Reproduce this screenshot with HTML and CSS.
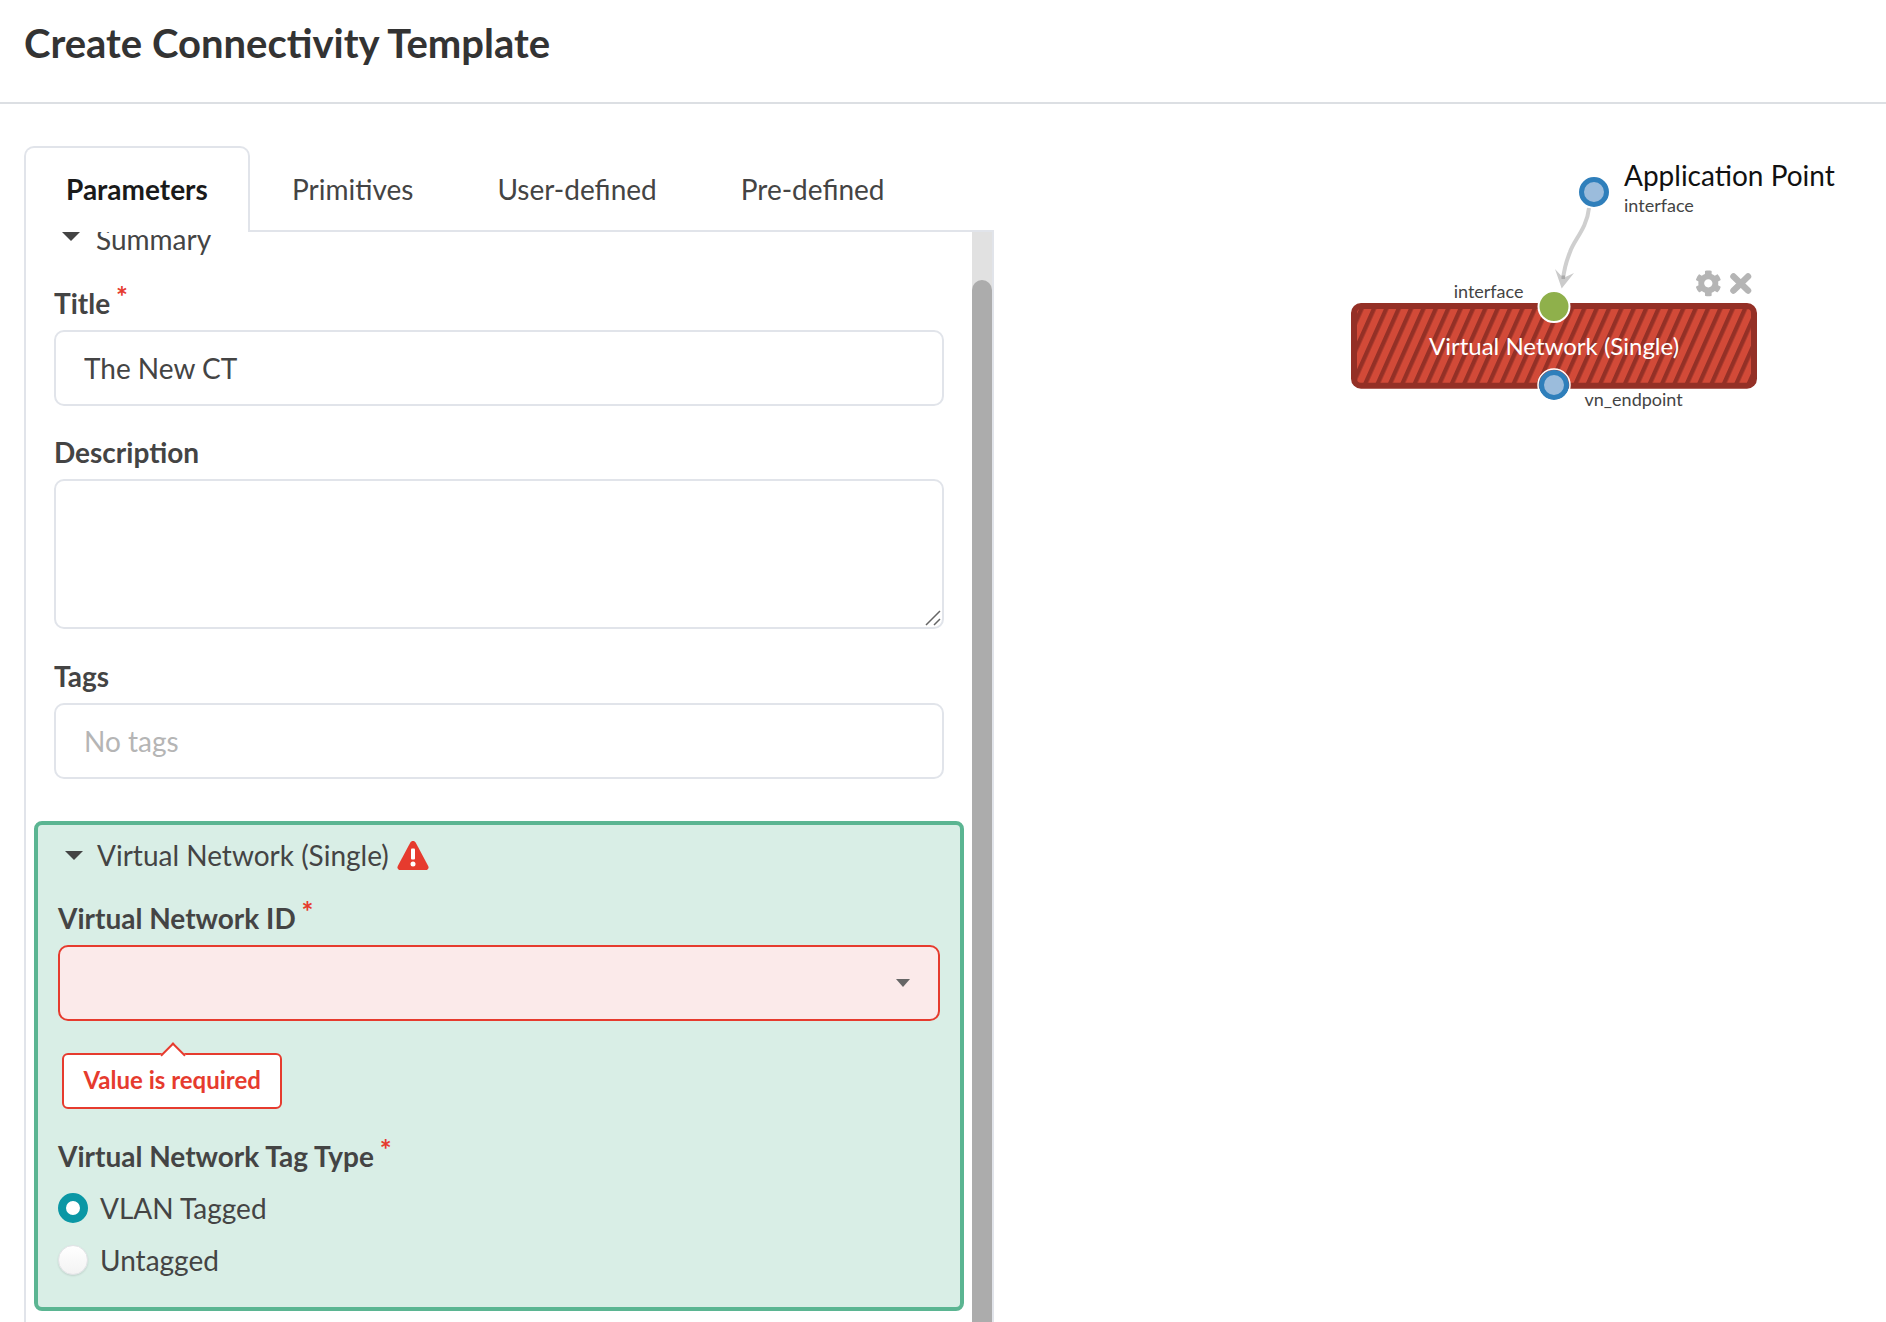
FILE: index.html
```html
<!DOCTYPE html>
<html lang="en">
<head>
<meta charset="utf-8">
<title>Create Connectivity Template</title>
<link rel="stylesheet" href="styles.css">
</head>
<body>
<header class="page-header"><h1>Create Connectivity Template</h1></header>
<main class="workspace">
  <section class="left">
    <nav class="tabs">
      <div class="tab active">Parameters</div>
      <div class="tab">Primitives</div>
      <div class="tab">User-defined</div>
      <div class="tab">Pre-defined</div>
      <div class="tab-rest"></div>
    </nav>
    <div class="panel">
      <form class="form">
        <div class="section-title summary"><span class="caret"></span>Summary</div>
        <label class="label first">Title <span class="req">*</span></label>
        <input class="field" type="text" value="The New CT">
        <label class="label desc-label">Description</label>
        <div class="area-wrap">
          <textarea class="field area"></textarea>
          <svg class="resizer" width="16" height="16" viewBox="0 0 16 16"><path d="M1 15L15 1M9 15L15 9" stroke="#666" stroke-width="1.500" fill="none"/></svg>
        </div>
        <label class="label">Tags</label>
        <input class="field" type="text" placeholder="No tags">
        <div class="vn-box">
          <div class="section-title"><span class="caret"></span>Virtual Network (Single)
            <svg class="warn" width="32" height="30" viewBox="0 0 32 30"><path d="M16 1c1.200 0 2.200.6 2.800 1.700l12.400 23.300c1 2-.3 4-2.500 4H3.300C1.100 30-.2 28 .8 26L13.200 2.700C13.800 1.600 14.800 1 16 1z" fill="#e63b2e"/><rect x="14" y="8.500" width="4" height="11" rx="1" fill="#fff"/><circle cx="16" cy="24" r="2.500" fill="#fff"/></svg>
          </div>
          <label class="label vn-label">Virtual Network ID <span class="req">*</span></label>
          <div class="select"><span class="select-caret"></span></div>
          <div class="error">Value is required</div>
          <label class="label tag-label">Virtual Network Tag Type <span class="req">*</span></label>
          <div class="radio-row"><span class="radio on"></span>VLAN Tagged</div>
          <div class="radio-row second"><span class="radio"></span>Untagged</div>
        </div>
      </form>
      <div class="scrollbar"><div class="thumb"></div></div>
    </div>
  </section>
  <section class="canvas">
    <svg class="diagram" width="892" height="400" viewBox="0 0 892 400">
      <defs>
        <pattern id="stripes" width="11.300" height="11.300" patternUnits="userSpaceOnUse" patternTransform="rotate(24)">
          <rect width="11.300" height="11.300" fill="#d24a38"/>
          <rect width="4.300" height="11.300" fill="#943026"/>
        </pattern>
      </defs>
      <g transform="translate(-994 -104)">
        <text class="t-title" x="1624" y="186">Application Point</text>
        <text class="t-small" x="1624" y="212">interface</text>
        <path d="M1589 208C1587 228 1574 240 1570 252C1566 262 1564 268 1563 280" fill="none" stroke="#cfcfcf" stroke-width="4"/>
        <path d="M1555 269L1561.700 288.500L1574 273L1563.300 278Z" fill="#cbcbcb"/>
        <rect x="1561.500" y="275.500" width="3.500" height="3.500" fill="#aaa"/>
        <circle cx="1594" cy="192" r="12.500" fill="#9bbcdc" stroke="#2f7fbb" stroke-width="5"/>
        <rect x="1354" y="306" width="400" height="79.700" rx="7" fill="url(#stripes)" stroke="#943026" stroke-width="6"/>
        <text class="t-node" x="1554" y="354.500" text-anchor="middle">Virtual Network (Single)</text>
        <text class="t-small" x="1523.500" y="298" text-anchor="end">interface</text>
        <circle cx="1554" cy="306.500" r="15.500" fill="#8fb04b" stroke="#fff" stroke-width="2"/>
        <circle cx="1554" cy="385" r="12.500" fill="#9bbcdc" stroke="#2f7fbb" stroke-width="5"/>
        <circle cx="1554" cy="385" r="16" fill="none" stroke="#fff" stroke-width="1.500"/>
        <text class="t-small" x="1584.500" y="405.500">vn_endpoint</text>
        <path transform="translate(1695 270) scale(.052)" fill="#b5b5b5" d="M487.4 315.7l-42.6-24.6c4.300-23.200 4.300-47 0-70.200l42.600-24.600c4.900-2.800 7.100-8.600 5.500-14-11.100-35.600-30-67.800-54.700-94.600-3.800-4.100-10-5.100-14.800-2.300L380.800 110c-17.900-15.400-38.500-27.300-60.800-35.100V25.800c0-5.600-3.900-10.500-9.400-11.700-36.700-8.200-74.300-7.800-109.200 0-5.500 1.200-9.400 6.100-9.400 11.700V75c-22.200 7.900-42.800 19.800-60.800 35.100L88.700 85.500c-4.900-2.800-11-1.900-14.800 2.300-24.700 26.700-43.600 58.900-54.700 94.600-1.700 5.400.6 11.200 5.500 14L67.300 221c-4.300 23.200-4.300 47 0 70.200l-42.600 24.600c-4.900 2.800-7.100 8.600-5.500 14 11.100 35.600 30 67.800 54.700 94.600 3.800 4.100 10 5.100 14.800 2.300l42.600-24.600c17.900 15.400 38.500 27.300 60.800 35.100v49.200c0 5.600 3.900 10.500 9.400 11.700 36.700 8.200 74.300 7.800 109.200 0 5.500-1.200 9.400-6.100 9.400-11.700v-49.200c22.200-7.900 42.800-19.800 60.800-35.100l42.600 24.600c4.900 2.800 11 1.900 14.800-2.300 24.700-26.700 43.600-58.900 54.700-94.600 1.500-5.500-.7-11.300-5.600-14.100zM256 336c-44.100 0-80-35.900-80-80s35.900-80 80-80 80 35.900 80 80-35.900 80-80 80z"/>
        <path d="M1733.500 276.500L1748 290.500M1748 276.500L1733.500 290.500" stroke="#b5b5b5" stroke-width="6.500" stroke-linecap="round" fill="none"/>
      </g>
    </svg>
  </section>
</main>
</body>
</html>
```

FILE: styles.css
```css
* { box-sizing: border-box; }
html, body { margin: 0; padding: 0; height: 1322px; overflow: hidden; background: #fff; }
body { font-family: Lato, "Open Sans", sans-serif; color: #444; font-size: 28px; line-height: 34px; }

.page-header { height: 104px; border-bottom: 2px solid #dcdfe3; padding-left: 24px; }
.page-header h1 { margin: 0; padding-top: 19px; font-size: 40px; line-height: 48px; font-weight: 700; color: #333; }

.workspace { display: flex; height: 1218px; }
.left { width: 994px; padding: 42px 0 0 24px; display: flex; flex-direction: column; flex: none; }
.canvas { flex: 1; min-width: 0; }
.diagram { display: block; }

.tabs { display: flex; height: 86px; flex: none; }
.tab { padding: 2px 42px 0; display: flex; align-items: center; height: 86px; border-bottom: 2px solid #e1e4ea; }
.tab.active { font-weight: 700; color: #1a1a1a; border: 2px solid #e1e4ea; border-bottom: 0; border-radius: 10px 10px 0 0; width: 226px; padding: 0 0 2px 40px; background: #fff; }
.tab-rest { flex: 1; height: 86px; border-bottom: 2px solid #e1e4ea; }

.panel { flex: 1; min-height: 0; display: flex; border-left: 2px solid #e1e4ea; border-right: 2px solid #e1e4ea; overflow: hidden; }
.form { flex: 1; min-width: 0; padding: 0 28px; overflow: hidden; }
.scrollbar { width: 20px; flex: none; background: #e1e1e1; padding-top: 48px; display: flex; }
.thumb { flex: 1; background: #acacac; border-radius: 10px 10px 0 0; }

.section-title { display: flex; align-items: center; height: 34px; }
.summary { margin-top: -10px; }
.caret { width: 0; height: 0; flex: none; border-left: 9px solid transparent; border-right: 9px solid transparent; border-top: 9px solid #444; margin: 0 14px 0 7px; }
.summary .caret { margin: -5px 16px 0 8px; }
.warn { margin-left: 8px; }

.label { display: block; font-weight: 700; height: 34px; margin: 30px 0 10px; }
.desc-label { margin-top: 29px; }
.req { color: #e63b2e; font-size: 28px; font-weight: 700; vertical-align: 7px; line-height: 0; margin-left: -1px; }

.field { display: block; width: 100%; height: 76px; border: 2px solid #e1e4ea; border-radius: 10px; padding: 0 28px; font: inherit; color: #444; background: #fff; outline: none; }
.field::placeholder { color: #b5b5b5; opacity: 1; }
.area-wrap { position: relative; }
.area { height: 150px; padding: 12px 28px; resize: none; }
.resizer { position: absolute; right: 3px; bottom: 3px; }

.vn-box { margin: 42px -20px 0; height: 490px; border: 4px solid #5bb592; border-radius: 8px; background: #d9eee6; padding: 13px 20px 0; }
.vn-label { margin-top: 29px; }
.select { height: 76px; border: 2px solid #e63b2e; border-radius: 10px; background: #fbeaea; display: flex; align-items: center; justify-content: flex-end; padding-right: 28px; }
.select-caret { width: 0; height: 0; border-left: 7.500px solid transparent; border-right: 7.500px solid transparent; border-top: 8px solid #666; }

.error { position: relative; margin: 32px 0 0 4px; width: 220px; height: 56px; background: #fff; border: 2px solid #e63b2e; border-radius: 6px; color: #e63b2e; font-weight: 700; font-size: 24px; line-height: 50px; padding-left: 19.500px; }
.error::before { content: ""; position: absolute; left: 100px; top: -9px; width: 16px; height: 16px; background: #fff; border-left: 2px solid #e63b2e; border-top: 2px solid #e63b2e; transform: rotate(45deg); }

.tag-label { margin-top: 30px; margin-bottom: 20px; }
.radio-row { display: flex; align-items: center; height: 30px; gap: 12px; }
.radio-row.second { margin-top: 22px; }
.radio { width: 30px; height: 30px; border-radius: 50%; flex: none; background: linear-gradient(#fff, #f3f3f3); border: 1px solid #e2e2e6; box-shadow: 0 1px 2px rgba(0,0,0,.12); }
.radio.on { background: #fff; border: 8px solid #0b97a5; box-shadow: none; }

.t-title { font-family: Lato, sans-serif; font-size: 28px; fill: #111; }
.t-small { font-family: Lato, sans-serif; font-size: 18px; fill: #444; }
.t-node { font-family: Lato, sans-serif; font-size: 24px; fill: #fff; }
```
